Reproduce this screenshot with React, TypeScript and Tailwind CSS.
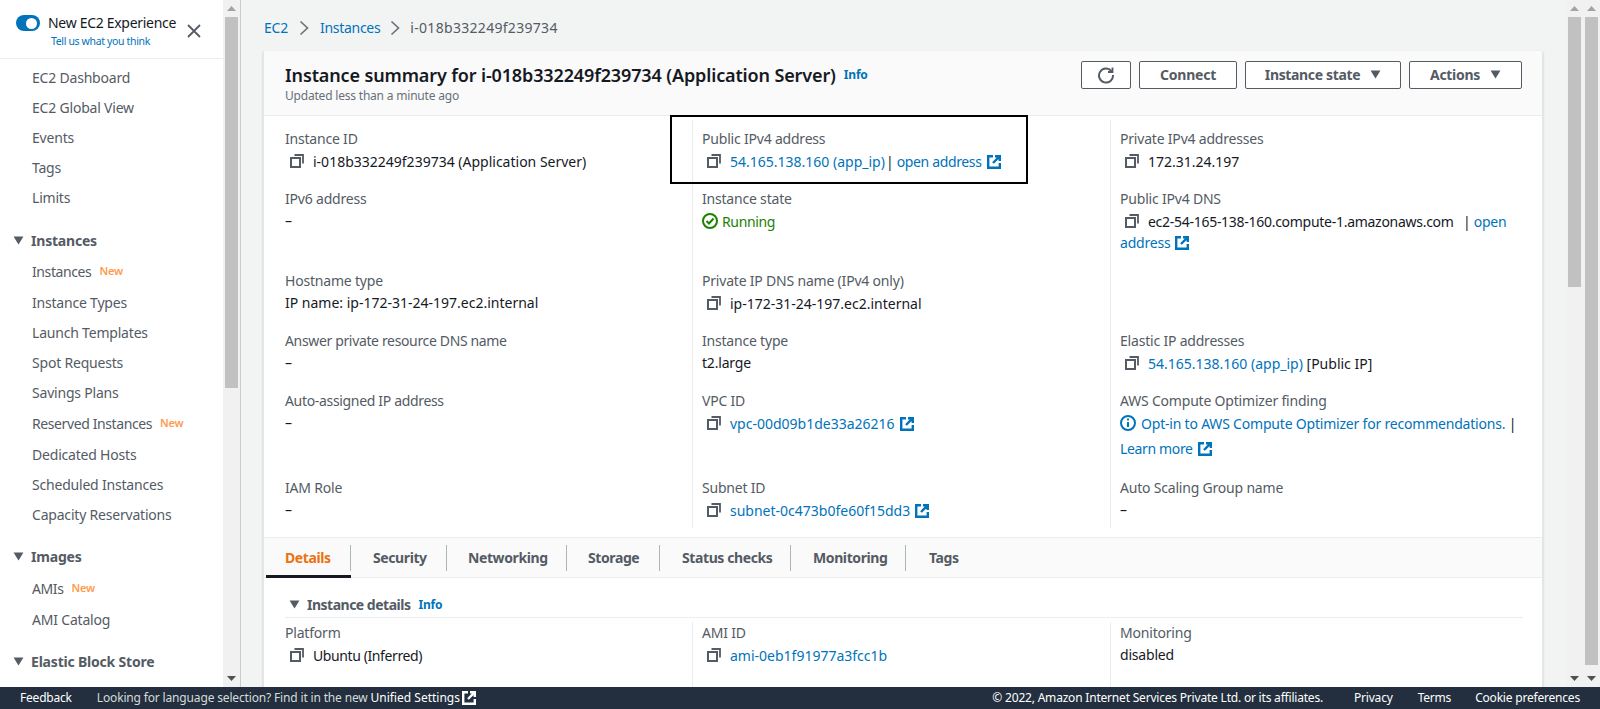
import React from "react";

const sideTop = ["EC2 Dashboard", "EC2 Global View", "Events", "Tags", "Limits"];
const sideInstances = [
  { label: "Instances", isNew: true },
  { label: "Instance Types" },
  { label: "Launch Templates" },
  { label: "Spot Requests" },
  { label: "Savings Plans" },
  { label: "Reserved Instances", isNew: true },
  { label: "Dedicated Hosts" },
  { label: "Scheduled Instances" },
  { label: "Capacity Reservations" },
];
const tabs = ["Details", "Security", "Networking", "Storage", "Status checks", "Monitoring", "Tags"];
const tabWidths = ["w-[85px]", "w-[96px]", "w-[120px]", "w-[93px]", "w-[131px]", "w-[115px]", "w-[80px]"];
const tabPads = ["pl-[19px]", "pl-[22px]", "pl-[21px]", "pl-[21px]", "pl-[22px]", "pl-[22px]", "pl-[23px]"];

function Caret({ className = "" }: { className?: string }) {
  return (
    <svg className={className} viewBox="0 0 12 10" fill="currentColor" aria-hidden="true">
      <path d="M0.5 0.5h11L6 9.5z" />
    </svg>
  );
}

function CopyIcon() {
  return (
    <svg className="w-[14px] h-[14px] shrink-0 ml-[5px] mr-[9px] text-[#545b64]" viewBox="0 0 14 14" fill="none" stroke="currentColor" strokeWidth="2" aria-hidden="true">
      <rect x="1" y="4" width="9" height="9" />
      <path d="M4.5 1H13v8.5" strokeWidth="1.8" />
    </svg>
  );
}

function ExtIcon({ className = "ml-[5px] text-[#0073bb]" }: { className?: string }) {
  return (
    <svg className={`inline-block w-[14px] h-[14px] align-[-2px] ${className}`} viewBox="0 0 14 14" fill="none" stroke="currentColor" strokeWidth="2.4" aria-hidden="true">
      <path d="M6 1.2H1.2v11.6h11.6V8" />
      <path d="M8 1.2h4.8V6M12.8 1.2L6 8" />
    </svg>
  );
}

function Link({ children }: { children: React.ReactNode }) {
  return <span className="text-[#0073bb]">{children}</span>;
}

function Copy({ children, className = "tracking-[0px]" }: { children: React.ReactNode; className?: string }) {
  return (
    <div className="flex items-center h-[22px] whitespace-nowrap">
      <CopyIcon />
      <span className={className}>{children}</span>
    </div>
  );
}

function Cell({ label, children, last, labelClass = "" }: { label: string; children?: React.ReactNode; last?: boolean; labelClass?: string }) {
  return (
    <div className={last ? "pb-[7px]" : "pb-4"}>
      <div className={`h-[22px] leading-[22px] text-[#545b64] ${labelClass}`}>{label}</div>
      {children}
    </div>
  );
}

function Dash() {
  return <div className="h-[22px] leading-[22px]">–</div>;
}

function Scrollbar({ thumb, className = "" }: { thumb: string; className?: string }) {
  return (
    <div className={`w-[17px] shrink-0 bg-[#f1f1f1] flex flex-col items-center ${className}`}>
      <div className="h-[17px] flex items-center justify-center">
        <svg className="w-[9px] h-[5px] text-[#a3a3a3]" viewBox="0 0 9 5" fill="currentColor"><path d="M4.5 0L9 5H0z" /></svg>
      </div>
      <div className={`w-[13px] bg-[#c1c1c1] ${thumb}`} />
      <div className="flex-1" />
      <div className="h-[17px] flex items-center justify-center">
        <svg className="w-[9px] h-[5px] text-[#505050]" viewBox="0 0 9 5" fill="currentColor"><path d="M0 0h9L4.5 5z" /></svg>
      </div>
    </div>
  );
}

function SideItem({ label, isNew }: { label: string; isNew?: boolean }) {
  return (
    <div className={`pl-8 flex items-center text-[#545b64] ${isNew ? "h-8 tracking-[-0.4px]" : "h-[30px]"}`}>
      <span>{label}</span>
      {isNew && <span className="ml-[8px] pt-px text-[11px] font-semibold tracking-[-0.2px] text-[#ff9a4d]">New</span>}
    </div>
  );
}

function SideHeader({ label, className = "" }: { label: string; className?: string }) {
  return (
    <div className={`h-[30px] pl-[13px] flex items-center font-bold text-[#545b64] ${className}`}>
      <Caret className="w-[11px] h-[9px] mr-[7px]" />
      <span>{label}</span>
    </div>
  );
}

export default function App() {
  return (
    <div className="relative h-[709px] w-[1600px] overflow-hidden flex flex-col font-['Noto_Sans',sans-serif] text-[14px] text-[#16191f] tracking-[-0.2px] bg-[#f2f3f3]">
      <div className="flex flex-1 min-h-0">
        {/* side navigation */}
        <aside className="w-[223px] shrink-0 bg-white overflow-hidden">
          <div className="h-[59px] border-b border-[#eaeded] pt-[14px] pl-4 flex">
            <div className="w-6 h-4 mt-px rounded-full bg-[#0073bb] flex items-center justify-end pr-[3px] shrink-0">
              <div className="w-[11px] h-[11px] rounded-full bg-white" />
            </div>
            <div className="ml-2 w-[131px] shrink-0">
              <div className="leading-[18px] whitespace-nowrap tracking-[-0.3px]">New EC2 Experience</div>
              <div className="text-[10.5px] leading-[18px] ml-[3px] text-[#0073bb] tracking-[-0.35px] whitespace-nowrap">Tell us what you think</div>
            </div>
            <svg className="w-[14px] h-[14px] ml-2 mt-[10px] text-[#545b64]" viewBox="0 0 14 14" fill="none" stroke="currentColor" strokeWidth="1.8"><path d="M1 1l12 12M13 1L1 13" /></svg>
          </div>
          <div className="pt-[3px]">
            {sideTop.map((s) => <SideItem key={s} label={s} />)}
            <SideHeader label="Instances" className="mt-[13px]" />
            {sideInstances.map((s) => <SideItem key={s.label} {...s} />)}
            <SideHeader label="Images" className="mt-3 mb-px" />
            <SideItem label="AMIs" isNew />
            <SideItem label="AMI Catalog" />
            <SideHeader label="Elastic Block Store" className="mt-3" />
          </div>
        </aside>
        <Scrollbar thumb="h-[371px]" />
        <div className="w-px bg-[#c6cdcd] shrink-0" />

        {/* main content */}
        <main className="flex-1 min-w-0 overflow-hidden pl-[22px] pr-[23px]">
          <nav className="h-[51px] flex items-center pt-[4px] pl-px whitespace-nowrap">
            <span className="text-[#0073bb]">EC2</span>
            <svg className="w-[10px] h-[16px] mx-[11px] text-[#687078]" viewBox="0 0 10 16" fill="none" stroke="currentColor" strokeWidth="1.6"><path d="M1.5 1.5L8.5 8l-7 6.5" /></svg>
            <span className="text-[#0073bb] tracking-[-0.3px]">Instances</span>
            <svg className="w-[10px] h-[16px] mx-[10px] text-[#687078]" viewBox="0 0 10 16" fill="none" stroke="currentColor" strokeWidth="1.6"><path d="M1.5 1.5L8.5 8l-7 6.5" /></svg>
            <span className="text-[#545b64] tracking-[0.3px]">i-018b332249f239734</span>
          </nav>

          <section className="bg-white border-l border-r border-[#e4e7e7] shadow-[0_1px_2px_rgba(0,28,36,0.2)]">
            <header className="h-[65px] bg-[#fafafa] border-b border-[#eaeded] pl-[21px] pr-5 flex justify-between">
              <div className="pt-[12px]">
                <div className="flex items-center h-6">
                  <span className="text-[18px] font-semibold tracking-[-0.13px] whitespace-nowrap">Instance summary for i-018b332249f239734 (Application Server)</span>
                  <span className="ml-2 text-[12px] font-bold text-[#0073bb]">Info</span>
                </div>
                <div className="text-[12px] leading-[18px] text-[#687078]">Updated less than a minute ago</div>
              </div>
              <div className="flex pt-[10px] gap-2 text-[#545b64] font-bold">
                <button className="w-[50px] h-[28px] border border-[#545b64] rounded-[2px] bg-white flex items-center justify-center">
                  <svg className="w-[18px] h-[18px]" viewBox="0 0 18 18" fill="none" stroke="currentColor" strokeWidth="2"><path d="M14.5 5.2A7 7 0 1 0 16 9" /><path d="M15.5 1.5v4.5H11" strokeWidth="1.8" /></svg>
                </button>
                <button className="w-[98px] h-[28px] border border-[#545b64] rounded-[2px] bg-white pb-[2px]">Connect</button>
                <button className="w-[156px] h-[28px] border border-[#545b64] rounded-[2px] bg-white flex items-center justify-center gap-[10px] tracking-[-0.35px] pb-[2px]">
                  Instance state <Caret className="w-[11px] h-[9px]" />
                </button>
                <button className="w-[113px] h-[28px] border border-[#545b64] rounded-[2px] bg-white flex items-center justify-center gap-[10px] tracking-[-0.3px] pb-[2px]">
                  Actions <Caret className="w-[11px] h-[9px]" />
                </button>
              </div>
            </header>

            <div className="grid grid-cols-[416px_418px_1fr] mt-[4px] ml-[12px] pb-[9px] [&>div]:pl-[9px] [&>div:not(:nth-child(3n+1))]:border-l [&>div]:border-[#eaeded] [&>div:nth-child(-n+3)]:pt-2">
              <Cell label="Instance ID"><Copy>i-018b332249f239734 (Application Server)</Copy></Cell>
              <Cell label="Public IPv4 address">
                <Copy className="tracking-[0px]"><Link>54.165.138.160 (app_ip)</Link><span className="ml-[1px] mr-[3px]">|</span><span className="tracking-[-0.35px]"><Link>open address<ExtIcon /></Link></span></Copy>
              </Cell>
              <Cell label="Private IPv4 addresses"><Copy>172.31.24.197</Copy></Cell>

              <Cell label="IPv6 address"><Dash /></Cell>
              <Cell label="Instance state">
                <div className="flex items-center h-[22px] text-[#1d8102] tracking-[-0.35px]">
                  <svg className="w-4 h-4 mr-1" viewBox="0 0 16 16" fill="none" stroke="currentColor" strokeWidth="2"><circle cx="8" cy="8" r="7" /><path d="M4.5 8l2.5 2.5L11.5 5.5" /></svg>
                  Running
                </div>
              </Cell>
              <Cell label="Public IPv4 DNS">
                <Copy className="tracking-[-0.28px]">ec2-54-165-138-160.compute-1.amazonaws.com <span className="ml-[6px]">|</span> <Link>open</Link></Copy>
                <div className="h-[22px] leading-[22px]"><Link>address<ExtIcon /></Link></div>
              </Cell>

              <Cell label="Hostname type"><div className="h-[22px] leading-[22px] tracking-[0px]">IP name: ip-172-31-24-197.ec2.internal</div></Cell>
              <Cell label="Private IP DNS name (IPv4 only)"><Copy>ip-172-31-24-197.ec2.internal</Copy></Cell>
              <div />

              <Cell label="Answer private resource DNS name" labelClass="tracking-[-0.35px]"><Dash /></Cell>
              <Cell label="Instance type"><div className="h-[22px] leading-[22px]">t2.large</div></Cell>
              <Cell label="Elastic IP addresses">
                <Copy><Link>54.165.138.160 (app_ip)</Link> [Public IP]</Copy>
              </Cell>

              <Cell label="Auto-assigned IP address" labelClass="tracking-[-0.33px]"><Dash /></Cell>
              <Cell label="VPC ID"><Copy><Link>vpc-00d09b1de33a26216<ExtIcon /></Link></Copy></Cell>
              <Cell label="AWS Compute Optimizer finding">
                <div className="flex items-center h-[22px] whitespace-nowrap">
                  <svg className="w-4 h-4 mr-[5px] text-[#0073bb]" viewBox="0 0 16 16" fill="none" stroke="currentColor" strokeWidth="2"><circle cx="8" cy="8" r="7" /><path d="M8 7v5M8 3.6v2" /></svg>
                  <Link>Opt-in to AWS Compute Optimizer for recommendations.</Link>&nbsp;|
                </div>
                <div className="h-[27px] leading-[30px] tracking-[-0.35px]"><Link>Learn more<ExtIcon /></Link></div>
              </Cell>

              <Cell label="IAM Role" last><Dash /></Cell>
              <Cell label="Subnet ID" last><Copy><Link>subnet-0c473b0fe60f15dd3<ExtIcon /></Link></Copy></Cell>
              <Cell label="Auto Scaling Group name" last><Dash /></Cell>
            </div>

            {/* tabs */}
            <div className="h-[41px] bg-[#fafafa] border-y border-[#eaeded] flex pl-[2px] font-bold text-[#545b64] tracking-[-0.4px]">
              {tabs.map((t, i) => (
                <div key={t} className={`${tabWidths[i]} h-[40px] flex items-center ${i === 0 ? "border-b-[3px] border-[#16191f] text-[#ec7211] pt-[2px]" : "pb-px"}`}>
                  <div className={`w-full h-[26px] leading-[26px] ${tabPads[i]} ${i < tabs.length - 1 ? "border-r border-[#aab7b8]" : ""}`}>{t}</div>
                </div>
              ))}
            </div>

            {/* instance details */}
            <div className="ml-[21px] mr-[19px]">
              <div className="h-[40px] border-b border-[#eaeded] flex items-center pt-[14px] pb-[0px]">
                <Caret className="w-[11px] h-[9px] ml-1 mr-[7px] text-[#545b64]" />
                <span className="font-bold text-[#545b64] tracking-[-0.5px]">Instance details</span>
                <span className="ml-2 text-[12px] font-bold text-[#0073bb]">Info</span>
              </div>
              <div className="grid grid-cols-[407px_418px_1fr] h-[70px] pt-[4px]">
                <div>
                  <div className="h-[22px] leading-[22px] text-[#545b64]">Platform</div>
                  <Copy className="tracking-[-0.4px]">Ubuntu (Inferred)</Copy>
                </div>
                <div className="border-l border-[#eaeded] pl-[9px]">
                  <div className="h-[22px] leading-[22px] text-[#545b64]">AMI ID</div>
                  <Copy><Link>ami-0eb1f91977a3fcc1b</Link></Copy>
                </div>
                <div className="border-l border-[#eaeded] pl-[9px]">
                  <div className="h-[22px] leading-[22px] text-[#545b64]">Monitoring</div>
                  <div className="h-[22px] leading-[22px]">disabled</div>
                </div>
              </div>
            </div>
          </section>
        </main>

        <Scrollbar thumb="h-[270px]" />
        <Scrollbar thumb="h-[648px]" />
      </div>

      {/* footer */}
      <footer className="h-[22px] bg-[#232f3e] shrink-0 flex items-center text-[12px] text-[#d5dbdb] pl-5 pr-5 whitespace-nowrap">
        <span className="text-white">Feedback</span>
        <span className="ml-[25px] tracking-[-0.16px]">Looking for language selection? Find it in the new <span className="text-white tracking-[0px]">Unified Settings</span></span>
        <ExtIcon className="ml-[2px] text-white" />
        <span className="ml-auto text-white">© 2022, Amazon Internet Services Private Ltd. or its affiliates.</span>
        <span className="ml-[31px] text-white">Privacy</span>
        <span className="ml-[25px] text-white">Terms</span>
        <span className="ml-[24px] text-white">Cookie preferences</span>
      </footer>

      {/* annotation drawn over the screenshot */}
      <div className="absolute left-[670px] top-[115px] w-[358px] h-[69px] border-2 border-black" />
    </div>
  );
}
